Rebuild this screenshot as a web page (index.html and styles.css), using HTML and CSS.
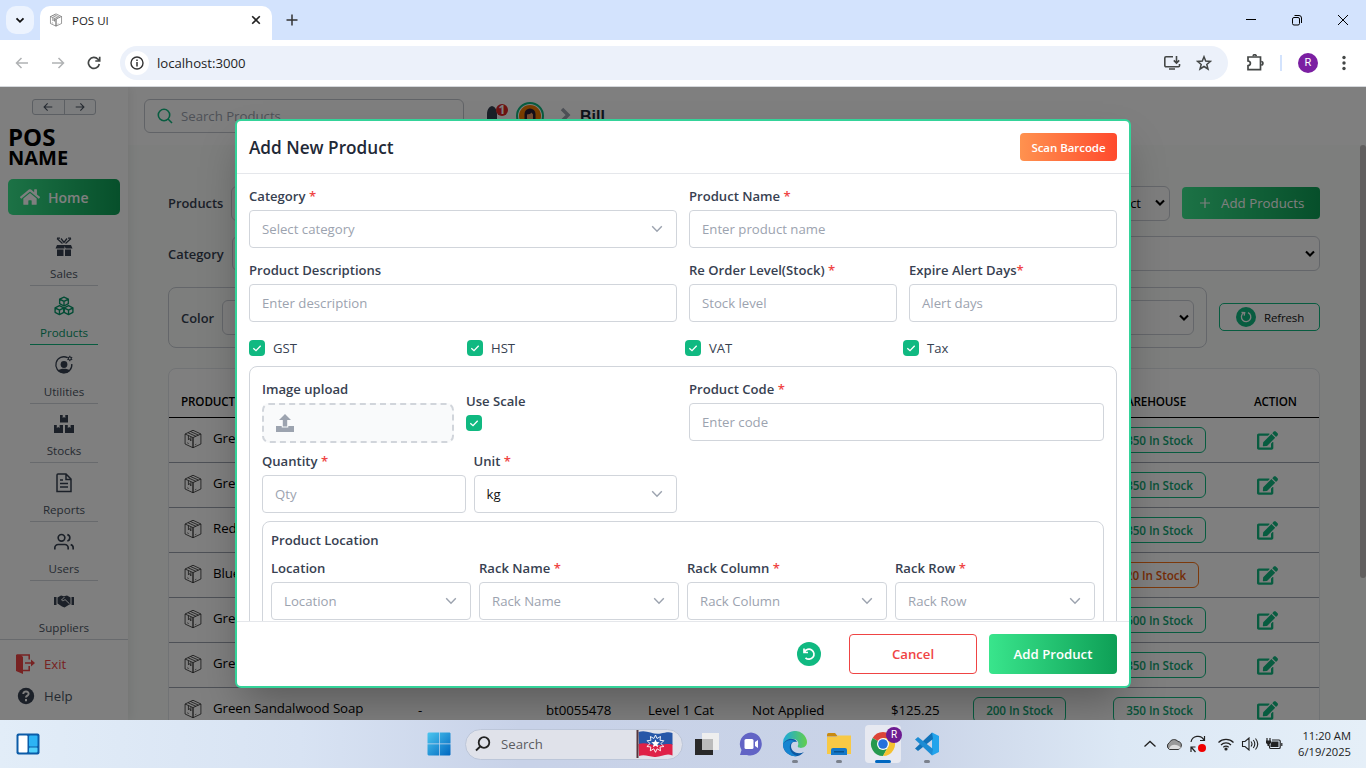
FILE: index.html
```html
<!DOCTYPE html>
<html lang="en">
<head>
<meta charset="utf-8">
<title>POS UI</title>
<link rel="stylesheet" href="styles.css">
</head>
<body>
<svg class="defs" aria-hidden="true">
  <symbol id="box" viewBox="0 0 24 24" fill="none" stroke="currentColor" stroke-width="1" stroke-linejoin="round"><path d="M2.500 6 12 10.300v12.200L2.500 18zM21.500 6 12 10.300v12.200l9.500-4.500zM2.500 6 12 1.500 21.500 6M6 4.500l9.500 4.300M9 3l9.500 4.300M6.500 8v5l1.500-1.500 1.500 2.800V9.500"/><path d="M5 16.500l2 1M14.500 19l1.500-.8" stroke-width=".8"/></symbol>
  <symbol id="edit" viewBox="0 0 576 512"><path fill="currentColor" d="M402.600 83.200l90.200 90.200c3.800 3.800 3.800 10 0 13.800L274.400 405.600l-92.800 10.300c-12.400 1.400-22.900-9.100-21.500-21.500l10.300-92.800L388.800 83.200c3.800-3.800 10-3.800 13.800 0zm162-22.900l-48.800-48.800c-15.200-15.200-39.900-15.200-55.200 0l-35.400 35.400c-3.800 3.800-3.800 10 0 13.800l90.200 90.200c3.800 3.800 10 3.800 13.800 0l35.400-35.400c15.200-15.300 15.200-40 0-55.200zM384 346.200V448H64V128h229.800c3.200 0 6.200-1.300 8.500-3.500l40-40c7.600-7.600 2.200-20.500-8.500-20.500H48C21.500 64 0 85.500 0 112v352c0 26.500 21.500 48 48 48h352c26.500 0 48-21.500 48-48V306.200c0-10.700-12.900-16-20.500-8.500l-40 40c-2.200 2.300-3.500 5.300-3.500 8.500z"/></symbol>
  <symbol id="chev" viewBox="0 0 12 8"><path d="M1.200 1.200 6 6.300l4.800-5.100" fill="none" stroke="currentColor" stroke-width="1.400"/></symbol>
  <symbol id="chevbold" viewBox="0 0 10 8"><path d="M1 1.500 5 5.500l4-4" fill="none" stroke="currentColor" stroke-width="2.100"/></symbol>
  <symbol id="left" viewBox="0 0 14 14"><path d="M13 7H1.500M6.500 2l-5 5 5 5" fill="none" stroke="currentColor" stroke-width="1.500"/></symbol>
  <symbol id="right" viewBox="0 0 14 14"><path d="M1 7h11.500M7.500 2l5 5-5 5" fill="none" stroke="currentColor" stroke-width="1.500"/></symbol>
  <symbol id="tick" viewBox="0 0 16 16"><path d="M4.300 8.200 7 10.700l4.700-5" fill="none" stroke="#fff" stroke-width="1.300"/></symbol>
</svg>

<div class="screen">
  <header class="tabs">
    <div class="tabsearch"><svg width="10" height="7"><use href="#chevbold"/></svg></div>
    <div class="tab">
      <svg class="fav" width="14" height="14"><use href="#box"/></svg><span>POS UI</span>
      <svg width="10" height="10" viewBox="0 0 10 10"><path d="m1.200 1.200 7.600 7.600m0-7.600L1.200 8.800" stroke="#222" stroke-width="1.600"/></svg>
    </div>
    <svg class="plus" width="12" height="12" viewBox="0 0 12 12"><path d="M6 .5v11M.5 6h11" stroke="#333" stroke-width="1.500"/></svg>
    <div class="winctl">
      <svg width="12" height="12" viewBox="0 0 12 12"><path d="M1 5.500h10" stroke="#000"/></svg>
      <svg width="12" height="12" viewBox="0 0 12 12" fill="none" stroke="#000"><rect x="1.500" y="3.500" width="7" height="7.500" rx="1.500"/><path d="M3.500 1.500H8a2.500 2.500 0 0 1 2.500 2.500v5"/></svg>
      <svg width="12" height="12" viewBox="0 0 12 12"><path d="m1 1 10 10M11 1 1 11" stroke="#000"/></svg>
    </div>
  </header>

  <div class="toolbar">
    <svg class="nav off" width="14" height="14"><use href="#left"/></svg>
    <svg class="nav off" width="14" height="14"><use href="#right"/></svg>
    <svg class="nav" width="14" height="14" viewBox="0 0 14 14" fill="none" stroke="#444746" stroke-width="1.700"><path d="M12.300 8A5.500 5.500 0 1 1 11 3.200L12.600 5M12.700.800V5H8.300"/></svg>
    <div class="url">
      <div class="info"><svg width="14" height="14" viewBox="0 0 14 14"><circle cx="7" cy="7" r="6" fill="none" stroke="#333" stroke-width="1.400"/><path d="M7 6v4.500M7 3.400v1.500" stroke="#333" stroke-width="1.500"/></svg></div>
      <span>localhost:3000</span>
      <svg class="install" width="18" height="16" viewBox="0 0 18 16" fill="none" stroke="#444746" stroke-width="1.600"><path d="M10 1.800H3A1.200 1.200 0 0 0 1.800 3v7.500A1.200 1.200 0 0 0 3 11.700h12.500a1 1 0 0 0 1-1V9M13.500 1v7M10.800 5.400l2.700 2.700 2.700-2.700M6 14h6"/></svg>
      <svg width="16" height="16" viewBox="0 0 16 16" fill="none" stroke="#444746" stroke-width="1.500"><path d="m8 1.800 1.700 4.300 4.700.300-3.600 3 1.200 4.600L8 11.500 4 14l1.200-4.600-3.600-3 4.700-.3z"/></svg>
    </div>
    <svg class="puzzle" width="18" height="18" viewBox="0 0 18 18" fill="none" stroke="#444746" stroke-width="1.700"><path d="M2 3h12.500v12.700H2v-4c3.200-.2 3.200-4.500 0-4.700z"/><path d="M7.200 2.200a1.500 1.500 0 0 1 3 0M15.200 7.500a1.500 1.500 0 0 1 0 3.400"/></svg>
    <i class="sep"></i>
    <b class="avatar">R</b>
    <svg class="dots" width="4" height="16" viewBox="0 0 4 16" fill="#444746"><circle cx="2" cy="2.500" r="1.700"/><circle cx="2" cy="8" r="1.700"/><circle cx="2" cy="13.500" r="1.700"/></svg>
  </div>

  <div class="page">
    <aside class="side">
      <div class="hist"><span><svg width="10" height="10"><use href="#left"/></svg></span><span><svg width="10" height="10"><use href="#right"/></svg></span></div>
      <div class="brand"><span>POS</span><small>NAME</small></div>
      <div class="home"><svg width="20" height="18" viewBox="0 0 576 512"><path fill="#fff" d="M280.370 148.260L96 300.110V464a16 16 0 0 0 16 16l112.060-.290a16 16 0 0 0 15.920-16V368a16 16 0 0 1 16-16h64a16 16 0 0 1 16 16v95.640a16 16 0 0 0 16 16.050L464 480a16 16 0 0 0 16-16V300L295.670 148.260a12.190 12.190 0 0 0-15.300 0zM571.600 251.470L488 182.560V44.050a12 12 0 0 0-12-12h-56a12 12 0 0 0-12 12v72.610L318.470 43a48 48 0 0 0-61 0L4.340 251.470a12 12 0 0 0-1.600 16.900l25.500 31A12 12 0 0 0 45.150 301l235.220-193.740a12.190 12.190 0 0 1 15.300 0L530.900 301a12 12 0 0 0 16.900-1.600l25.500-31a12 12 0 0 0-1.700-16.930z"/></svg><span>Home</span></div>
      <nav class="menu">
        <div class="item"><svg width="20" height="20" viewBox="0 0 20 20" fill="#374151"><path d="M3 8h14l1.500 3.500h-6.800L10.500 9v2.500H1.500zM3 12.500h6.500V19H3zM11 12.500h6V19h-6z"/><path d="m3 1.500 5.500 5M17 1.500l-5.500 5M3 1.200h3M17 1.200h-3M7 1.500l3 4 3-4" fill="none" stroke="#374151" stroke-width="1.300"/></svg><span>Sales</span></div>
        <div class="item on"><svg width="22" height="22" viewBox="0 0 22 22" fill="none" stroke="#059669" stroke-width="1.500" stroke-linejoin="round"><g id="cube"><path d="m11 1.200 4.800 2.300v5L11 11 6.200 8.500v-5zM6.200 3.500 11 6l4.800-2.500M11 6v5"/></g><use href="#cube" x="-5" y="9.500"/><use href="#cube" x="5" y="9.500"/></svg><span>Products</span></div>
        <div class="item"><svg width="20" height="20" viewBox="0 0 20 20"><path d="M13.500 2.700A8 8 0 1 0 17.800 9" fill="none" stroke="#374151" stroke-width="1.300"/><circle cx="10" cy="9.500" r="3.400" fill="#374151"/><path d="M4 15.500c2-2.500 10-2.500 12 0-2 3.600-10 3.600-12 0z" fill="#374151"/><circle cx="15.800" cy="3.500" r="1.500" fill="none" stroke="#374151" stroke-width="1.100"/><path d="M15.800.800v1.200M15.800 5v1.200M13.400 2.200l1 .6M17.200 4.200l1 .6M18.200 2.200l-1 .6M14.400 4.200l-1 .6" stroke="#374151" stroke-width="1.100"/></svg><span>Utilities</span></div>
        <div class="item"><svg width="20" height="20" viewBox="0 0 20 20" fill="#374151"><path d="M6 1h2.700v3L10 3l1.300 1V1H14v7.500H6zM0 11h2.800v3l1.400-1 1.400 1v-3H9v8H0zM11 11h2.800v3l1.400-1 1.400 1v-3H20v8h-9z"/></svg><span>Stocks</span></div>
        <div class="item"><svg width="20" height="20" viewBox="0 0 20 20" fill="none" stroke="#374151" stroke-width="1.500"><path d="M4 1h8l5 5v12.500H3V2a1 1 0 0 1 1-1zM12 1v5.500h5M6 7h3M6 10.500h8M6 14h8"/></svg><span>Reports</span></div>
        <div class="item"><svg width="20" height="20" viewBox="0 0 24 24" fill="none" stroke="#374151" stroke-width="2"><path d="M17 21v-2a4 4 0 0 0-4-4H5a4 4 0 0 0-4 4v2M23 21v-2a4 4 0 0 0-3-3.870M16 3.130a4 4 0 0 1 0 7.750"/><circle cx="9" cy="7" r="4"/></svg><span>Users</span></div>
        <div class="item wide"><svg width="20" height="20" viewBox="0 0 20 20" fill="#374151"><path d="M0 6h2.500v8H0zM17.500 6H20v8h-2.500zM3.500 6.500 7 4.500l3 .7 3-.7 3.500 2v6.800l-1.500.5-4.500 2.700L8 15.500l-4.500-3z"/><path d="m10.500 6-3 3c1 1.200 2.500.7 3.500-.5l4.500 4.300" fill="none" stroke="#fff"/></svg><span>Suppliers</span></div>
      </nav>
      <div class="foot exit"><svg width="20" height="20" viewBox="0 0 20 20"><path d="M0 1h5l2 2v17l-7-3z" fill="#ef4444"/><path d="M.500 1h12.700v4.500M13.200 12v4.500H7M9 9h8" fill="none" stroke="#ef4444" stroke-width="1.500"/><path d="m15 5.500 4 3.500-4 3.500z" fill="#ef4444"/></svg><span>Exit</span></div>
      <div class="foot"><svg width="20" height="20" viewBox="0 0 20 20"><circle cx="10" cy="10" r="8.200" fill="#374151"/><path d="M7.300 8c0-3.700 5.600-3.200 5.300 0-.2 1.700-2.600 1.600-2.600 3.600M10 13v2.200" fill="none" stroke="#fff" stroke-width="2"/></svg><span>Help</span></div>
    </aside>

    <main class="main">
      <div class="top">
        <div class="search"><svg width="16" height="16" viewBox="0 0 16 16" fill="none" stroke="#10b981" stroke-width="1.600"><circle cx="7" cy="7" r="5.700"/><path d="m11 11 4 4"/></svg><span>Search Products</span></div>
        <div class="bell"><svg width="16" height="20" viewBox="0 0 16 20"><path d="M6 2c-3.500 1-5 4-5 8v5h10v-5c0-4-1.500-7-5-8z" fill="#374151"/></svg><b>1</b></div>
        <div class="user"><svg width="28" height="28" viewBox="0 0 28 28"><circle cx="14" cy="14" r="13" fill="#fff" stroke="#10b981" stroke-width="2"/><circle cx="14" cy="14" r="11" fill="#f57c00"/><path d="M8.500 21V12a5.500 5.500 0 0 1 11 0v9z" fill="#2d1f35"/><path d="M11 12.500c2 0 4-1 4.500-2l1.500 2v4a3 3 0 0 1-6 0z" fill="#e89a6a"/></svg></div>
        <svg class="bc" width="12" height="16" viewBox="0 0 12 16"><path d="m2 2 6 6-6 6" fill="none" stroke="#9ca3af" stroke-width="3.500"/></svg>
        <strong>Bill</strong>
      </div>
      <div class="content">
        <div class="row r1"><label>Products</label><div class="sel"><span>Product</span><svg width="10" height="8"><use href="#chevbold"/></svg></div><div class="addp"><svg width="10" height="10" viewBox="0 0 10 10"><path d="M5 0v10M0 5h10" stroke="#fff" stroke-width="1.200"/></svg><span>Add Products</span></div></div>
        <div class="row r2"><label>Category</label><div class="sel"><svg width="10" height="8"><use href="#chevbold"/></svg></div></div>
        <div class="row r3"><div class="filter"><label>Color</label><div class="sel"><svg width="10" height="8"><use href="#chevbold"/></svg></div></div><div class="refresh"><svg width="20" height="20" viewBox="0 0 20 20"><circle cx="10" cy="10" r="10" fill="#10b981"/><path d="M7.500 6A4.700 4.700 0 1 0 12 5.600M5.500 5.500l3.200.200-.500 3" fill="none" stroke="#fff" stroke-width="1.300"/></svg><span>Refresh</span></div></div>
        <section class="table">
          <div class="tr th"><span>PRODUCT</span><span class="c8">WAREHOUSE</span><span class="c9">ACTION</span></div>
          <div class="tr"><svg class="pk"><use href="#box"/></svg><span class="nm cut">Green</span><span class="c8"><em>350 In Stock</em></span><svg class="c9 ed"><use href="#edit"/></svg></div>
          <div class="tr"><svg class="pk"><use href="#box"/></svg><span class="nm cut">Green</span><span class="c8"><em>350 In Stock</em></span><svg class="c9 ed"><use href="#edit"/></svg></div>
          <div class="tr"><svg class="pk"><use href="#box"/></svg><span class="nm cut">Red</span><span class="c8"><em>350 In Stock</em></span><svg class="c9 ed"><use href="#edit"/></svg></div>
          <div class="tr"><svg class="pk"><use href="#box"/></svg><span class="nm cut">Blue</span><span class="c8"><em class="low">20 In Stock</em></span><svg class="c9 ed"><use href="#edit"/></svg></div>
          <div class="tr"><svg class="pk"><use href="#box"/></svg><span class="nm cut">Green</span><span class="c8"><em>500 In Stock</em></span><svg class="c9 ed"><use href="#edit"/></svg></div>
          <div class="tr"><svg class="pk"><use href="#box"/></svg><span class="nm cut">Green</span><span class="c8"><em>350 In Stock</em></span><svg class="c9 ed"><use href="#edit"/></svg></div>
          <div class="tr"><svg class="pk"><use href="#box"/></svg><span class="nm">Green Sandalwood Soap</span><span class="c2">-</span><span class="c3">bt0055478</span><span class="c4">Level 1 Cat</span><span class="c5">Not Applied</span><span class="c6">$125.25</span><span class="c7"><em>200 In Stock</em></span><span class="c8"><em>350 In Stock</em></span><svg class="c9 ed"><use href="#edit"/></svg></div>
        </section>
      </div>
      <i class="scroll"></i>
    </main>

    <div class="overlay">
      <div class="modal">
        <div class="mhead"><h2>Add New Product</h2><button class="scan">Scan Barcode</button></div>
        <div class="mbody">
          <div class="grid2">
            <div class="f"><label>Category <i>*</i></label><div class="in"><span>Select category</span><svg width="12" height="8"><use href="#chev"/></svg></div></div>
            <div class="f"><label>Product Name <i>*</i></label><div class="in"><span>Enter product name</span></div></div>
            <div class="f"><label>Product Descriptions</label><div class="in"><span>Enter description</span></div></div>
            <div class="grid2">
              <div class="f"><label>Re Order Level(Stock) <i>*</i></label><div class="in"><span>Stock level</span></div></div>
              <div class="f"><label>Expire Alert Days<i>*</i></label><div class="in"><span>Alert days</span></div></div>
            </div>
          </div>
          <div class="checks">
            <div><svg class="cb"><use href="#tick"/></svg><span>GST</span></div><div><svg class="cb"><use href="#tick"/></svg><span>HST</span></div><div><svg class="cb"><use href="#tick"/></svg><span>VAT</span></div><div><svg class="cb"><use href="#tick"/></svg><span>Tax</span></div>
          </div>
          <div class="card">
            <div class="grid2">
              <div class="pair">
                <div class="f up"><label>Image upload</label><div class="drop"><svg width="18" height="18" viewBox="0 0 18 18" fill="#9ca3af"><path d="m9 0 6 6h-3.800v6.500H6.800V6H3z"/><path d="M0 12h5.700v1.500h6.600V12H18v6H0z"/></svg></div></div>
                <div class="scale"><label>Use Scale</label><svg class="cb"><use href="#tick"/></svg></div>
              </div>
              <div class="f"><label>Product Code <i>*</i></label><div class="in"><span>Enter code</span></div></div>
            </div>
            <div class="grid2 second">
              <div class="grid2 tight">
                <div class="f"><label>Quantity <i>*</i></label><div class="in"><span>Qty</span></div></div>
                <div class="f"><label>Unit <i>*</i></label><div class="in val"><span>kg</span><svg width="12" height="8"><use href="#chev"/></svg></div></div>
              </div>
            </div>
            <div class="loc">
              <h3>Product Location</h3>
              <div class="grid4">
                <div class="f"><label>Location</label><div class="in"><span>Location</span><svg width="12" height="8"><use href="#chev"/></svg></div></div>
                <div class="f"><label>Rack Name <i>*</i></label><div class="in"><span>Rack Name</span><svg width="12" height="8"><use href="#chev"/></svg></div></div>
                <div class="f"><label>Rack Column <i>*</i></label><div class="in"><span>Rack Column</span><svg width="12" height="8"><use href="#chev"/></svg></div></div>
                <div class="f"><label>Rack Row <i>*</i></label><div class="in"><span>Rack Row</span><svg width="12" height="8"><use href="#chev"/></svg></div></div>
              </div>
            </div>
          </div>
        </div>
        <div class="mfoot">
          <svg width="24" height="24" viewBox="0 0 24 24"><circle cx="12" cy="12" r="12" fill="#10b981"/><path d="M7 6.500v4h4M7.500 10a5 5 0 1 1 1 5.800" fill="none" stroke="#fff" stroke-width="1.700"/></svg>
          <button class="cancel">Cancel</button><button class="add">Add Product</button>
        </div>
      </div>
    </div>
  </div>

  <footer class="taskbar">
    <svg class="widget" width="24" height="24" viewBox="0 0 24 24"><rect x=".500" y="1.500" width="23" height="21" rx="2" fill="#0c5ca8"/><rect x="2.500" y="3.500" width="9" height="17" rx="1" fill="#fff"/><rect x="13" y="3.500" width="8.500" height="11" rx="1" fill="#2db4f5"/><rect x="13" y="15.500" width="8.500" height="5" rx="1" fill="#51d1fb"/></svg>
    <div class="dock">
      <svg width="24" height="24" viewBox="0 0 24 24"><defs><linearGradient id="w" x2="1" y2="1"><stop stop-color="#4cc6ef"/><stop offset="1" stop-color="#0067c0"/></linearGradient></defs><path fill="url(#w)" d="M1.500.500H12v11H.500v-10zM12.700.500h10l.8.800v10.200H12.700zM.500 12.300H12v11.200H1.500l-1-1zM12.700 12.300h10.800v10.400l-.8.800h-10z"/></svg>
      <div class="find"><svg width="16" height="16" viewBox="0 0 16 16" fill="none" stroke="#222" stroke-width="1.800"><circle cx="9" cy="6.500" r="5.300"/><path d="m5.200 10.500-4.200 4"/></svg><span>Search</span>
        <svg class="flag" width="38" height="30" viewBox="0 0 38 30"><path d="M2.500 3c8-3 14 3 22 1.500 5-.8 8-2 12-.5V16H3z" fill="#2757a8"/><path d="M2.500 15c8-2.500 14 2.500 22 1 5-.8 8-1.500 12-.5v11c-7-3-11 2-18 1.500-6-.5-10-3-15.500-1z" fill="#df2147"/><path d="m19.500 6 1.500 3.500 3.500-2-.5 3.800 3.800.4-2.900 2.900 3 2.900-3.900.5.500 3.800-3.400-2-1.600 3.500-1.700-3.500-3.500 2 .5-3.800-3.900-.5 3.100-2.900-2.900-2.900 3.800-.4-.5-3.800 3.500 2z" fill="none" stroke="#fff" stroke-width=".9"/><path d="m19.500 10.500 1.200 2.600 3 .2-2.300 2 .7 3-2.600-1.600-2.600 1.600.7-3-2.300-2 3-.2z" fill="#fff"/><path d="M1.500 1v28" stroke="#55363d" stroke-width="2"/></svg></div>
      <div class="app"><svg width="26" height="26" viewBox="0 0 26 26"><rect x="8" y="2" width="17" height="17" fill="#eee"/><rect x="1" y="8" width="18" height="16" fill="#292929"/><path d="M8 8h11v11H8z" fill="#bbb"/></svg></div>
      <div class="app"><svg width="24" height="24" viewBox="0 0 24 24"><path d="M12 .500A11.500 11.500 0 1 1 8 23H1l1.500-5A11.500 11.500 0 0 1 12 .500z" fill="#6264c5"/><rect x="5.500" y="7" width="9" height="10" rx="1.500" fill="#fff"/><path d="m16 10 3-2v8l-3-2z" fill="#fff"/></svg></div>
      <div class="app run"><svg width="26" height="26" viewBox="0 0 26 26"><defs><linearGradient id="e1"><stop stop-color="#1ba7de"/><stop offset="1" stop-color="#63cf4c"/></linearGradient></defs><path d="M1 13A12 12 0 0 1 25 11c0 6-7 7-9 5-1-1 1-2 0-5-2-4-10-5-15 2z" fill="url(#e1)"/><path d="M1 13c4-7 12-6 14-2-3-1-6 0-6 4 0 6 7 9 13 6A12 12 0 0 1 1 13z" fill="#0c59a4"/><path d="M1 13c4-5 10-5 13-2-4-1-7 2-6 7 1 4 4 6 7 7A12 12 0 0 1 1 13z" fill="#1684d0"/></svg></div>
      <div class="app run"><svg width="26" height="24" viewBox="0 0 26 24"><path d="M1 2.500Q1 1 2.500 1H9l3 3.500H1z" fill="#c98a10"/><path d="M1 5h9l2-1.500h13V22H1z" fill="#f8c945"/><path d="M5 23v-5q0-2 2-2h12q2 0 2 2v5z" fill="#1377c8"/><path d="M8 19h10v1.500H8z" fill="#075390"/></svg></div>
      <div class="app chrome"><svg width="26" height="26" viewBox="0 0 26 26"><path d="M13 13 2.600 7A12 12 0 0 1 23.400 7z" fill="#db4437"/><path d="M13 13 2.600 7A12 12 0 0 0 13 25l5-9z" fill="#26994e"/><path d="M13 13 18 16l-5 9A12 12 0 0 0 23.400 7H13z" fill="#f5c12f"/><circle cx="13" cy="13" r="6" fill="#fff"/><circle cx="13" cy="13" r="4.800" fill="#2571dc"/></svg><b>R</b></div>
      <div class="app run"><svg width="26" height="26" viewBox="0 0 26 26"><path d="M18 1.500 25 5v16l-7 3.500z" fill="#23a4ec"/><path d="m18 1.500 1 6.500L4 20l-3-2.500z" fill="#1273b9"/><path d="M1 8.500 4 6l15 12-1 6.500z" fill="#1c8cd4"/></svg></div>
    </div>
    <div class="tray">
      <svg class="more" width="14" height="14" viewBox="0 0 14 14"><path d="m1.500 9.500 5.500-5 5.500 5" fill="none" stroke="#222" stroke-width="1.300"/></svg>
      <svg width="18" height="14" viewBox="0 0 18 14"><path d="M4.500 12.500a4 4 0 0 1 0-7 5 5 0 0 1 8.500-1c4 0 5 6.500 0 8z" fill="#999" stroke="#333"/><path d="M4 12c1-5 8-6 12-1l-3 1z" fill="#ddd"/></svg>
      <svg width="18" height="18" viewBox="0 0 18 18"><path d="M2 7A7 7 0 0 1 15 5M15.500 1v4.500H11M2 17v-5h4.500M2.500 12.500l4 4.500" fill="none" stroke="#222" stroke-width="1.200"/><circle cx="13" cy="13" r="4" fill="#f00000"/></svg>
      <svg class="wifi" width="18" height="14" viewBox="0 0 18 14" fill="none" stroke="#222" stroke-width="1.200"><path d="M1.500 5.500a10.500 10.500 0 0 1 15 0M4 8a7 7 0 0 1 10 0M6.300 10.300a4 4 0 0 1 5.400 0"/><circle cx="9" cy="12" r="1" fill="#222"/></svg>
      <svg width="18" height="14" viewBox="0 0 18 14" fill="none" stroke="#222" stroke-width="1.100"><path d="M1.500 4.500H4L8 1v12L4 9.500H1.500zM10 4.500q2 2.500 0 5M12.300 3q3 4 0 8M14.500 1.500q4.500 5.500 0 11"/></svg>
      <svg width="18" height="14" viewBox="0 0 18 14"><path d="M6.500 4.500h7v5.500h-8V8z" fill="#222"/><path d="M7 3h7q1.200 0 1.200 1.200v6q0 1.300-1.200 1.300H5.500Q4.500 11.500 4.500 10V8.500M16.800 6v3M2 1v3M5 1v3" fill="none" stroke="#222" stroke-width="1.200"/><path d="M1 3.500h5V6L4.500 7.500v1.500h-2V7.500L1 6z" fill="#222"/></svg>
      <div class="clock"><span>11:20 AM</span><span>6/19/2025</span></div>
    </div>
  </footer>
</div>
</body>
</html>
```
FILE: styles.css
```css
* { box-sizing: border-box; }
body { margin: 0; font-family: "Open Sans", "Noto Sans", sans-serif; font-size: 13px; color: #111; }
svg { display: block; flex: none; }
i { font-style: normal; }
button { font-family: inherit; padding: 0; border: 0; }
.defs { position: absolute; width: 0; height: 0; }
.screen { width: 1366px; height: 768px; overflow: hidden; display: flex; flex-direction: column; }

/* browser frame */
.tabs { height: 40px; background: #d3e3fd; display: flex; align-items: flex-end; padding-left: 6px; flex: none; }
.tabsearch { width: 28px; height: 28px; border-radius: 10px; background: #ecf3fe; display: flex; align-items: center; justify-content: center; margin: 0 6px 6px 0; }
.tab { width: 232px; height: 34px; border-radius: 10px 10px 0 0; background: #fff; display: flex; align-items: center; padding: 0 11px 6px 9px; gap: 9px; font-size: 11.5px; color: #1f1f1f; }
.tab span { flex: 1; }
.fav { color: #555; }
.plus { margin: 0 0 14px 14px; }
.winctl { margin-left: auto; display: flex; gap: 34px; padding: 0 17px 14px 0; }
.toolbar { height: 47px; flex: none; background: #fff; border-bottom: 1px solid #d5d8dc; display: flex; align-items: center; padding-left: 15px; }
.nav { margin-right: 22px; color: #444746; }
.nav.off { color: #b0b2b4; }
.nav + .url { margin-left: -3px; }
.url { width: 1108px; height: 34px; border-radius: 17px; background: #ecf1fa; display: flex; align-items: center; padding: 0 16px 0 5px; font-size: 13.2px; letter-spacing: -.03px; color: #1f1f1f; }
.info { width: 24px; height: 24px; border-radius: 50%; background: #fff; display: grid; place-items: center; margin-right: 8px; }
.install { margin: 0 15px 0 auto; }
.puzzle { margin-left: 18px; }
.sep { width: 2px; height: 16px; background: #d3e3fd; margin: 0 16px; }
.avatar { width: 20px; height: 20px; border-radius: 50%; background: #7b1fa2; color: #fff; font: 11px/20px Roboto, sans-serif; text-align: center; }
.dots { margin-left: 24px; }

/* page */
.page { flex: 1; min-height: 0; position: relative; display: flex; background: #fafdfb; overflow: hidden; }
.side { width: 128px; background: #fff; box-shadow: 2px 0 10px rgba(0,0,0,.08); z-index: 1; flex: none; }
.hist { display: flex; width: 64px; height: 16px; margin: 12px auto 0; border: 1px solid #b9bec7; border-radius: 3px; background: #f8fafc; }
.hist span { flex: 1; display: grid; place-items: center; color: #4b5563; }
.hist span + span { border-left: 1px solid #b9bec7; }
.brand { margin: 10px 0 0 8px; display: flex; flex-direction: column; font-weight: 700; font-size: 24px; line-height: 23px; color: #000; }
.brand small { font-size: 20px; line-height: 20px; }
.home { margin: 11px 8px 0; height: 36px; border-radius: 5px; background: linear-gradient(90deg, #39e58c, #0e9f56); display: flex; align-items: center; gap: 8px; padding-left: 12px; color: #fff; font-weight: 600; font-size: 14px; }
.menu { margin-top: 12px; }
.item { height: 59px; width: 68px; margin: 0 auto; border-bottom: 1px solid #d1d5db; display: flex; flex-direction: column; align-items: center; justify-content: space-between; padding: 10px 0 3px; font-size: 11.6px; line-height: 17px; color: #4b5563; }
.item svg { height: 20px; }
.item.on { color: #059669; border-color: #10b981; }
.item.wide { width: 128px; }
.foot { height: 32px; display: flex; align-items: center; gap: 8px; padding-left: 16px; font-size: 13.2px; color: #4b5563; }
.exit { margin-top: 8px; color: #ef4444; }
.main { flex: 1; position: relative; }
.top { height: 58px; background: #fff; padding: 12px 0 0 16px; display: flex; }
.search { width: 320px; height: 34px; border: 1px solid #c3c7ce; border-radius: 6px; display: flex; align-items: center; gap: 8px; padding-left: 12px; color: #9ca3af; font-size: 13.2px; }
.bell { margin-left: 22px; display: flex; padding-top: 5px; width: 22px; }
.bell b { flex: none; width: 12px; height: 12px; margin: 0 0 0 -6px; border-radius: 50%; background: #dc2626; color: #fff; font-size: 12px; line-height: 12px; text-align: center; }
.user { margin: 3px 0 0 8px; }
.bc { margin: 8px 0 0 16px; }
.top strong { margin: 7px 0 0 8px; font: bold 16px/22px "Liberation Sans", sans-serif; color: #1f2937; }
.content { padding: 40px 46px 0 40px; }
.row { display: flex; align-items: center; gap: 8px; }
.row label { font-weight: 600; color: #374151; font-size: 12.9px; }
.sel { flex: 1; height: 35px; border: 1px solid #c9cdd4; border-radius: 6px; display: flex; align-items: center; justify-content: flex-end; gap: 14px; padding-right: 4px; color: #000; background: #fdfdfd; font-size: 13px; }
.r1 { height: 36px; }
.addp { width: 138px; height: 32px; border-radius: 4px; margin-left: 4px; background: linear-gradient(90deg, #39e58c, #0e9f56); color: #fff; display: flex; gap: 11px; align-items: center; padding-left: 18px; font-size: 13.3px; }
.r2 { margin-top: 15px; height: 35px; }
.r3 { margin-top: 16px; gap: 12px; }
.filter { flex: 1; height: 61px; border: 1px solid #c9cdd4; border-radius: 8px; display: flex; align-items: center; gap: 8px; padding: 0 12px; }
.refresh { width: 101px; height: 28px; border: 1px solid #10b981; border-radius: 5px; background: #fff; display: flex; align-items: center; gap: 8px; padding-left: 16px; font-size: 11.5px; letter-spacing: -.15px; color: #111; margin-bottom: 1px; }
.table { margin-top: 20px; border: 1px solid #e3e6ea; border-radius: 8px; background: #fff; }
.tr { height: 45px; border-bottom: 1px solid #9ca3af; display: grid; grid-template-columns: 12px 32px 205px 128px 102px 104px 139px 82px 140px 141px 65px; align-items: center; font-size: 13.3px; letter-spacing: -.08px; color: #000; }
.th { height: 49px; border-color: #000; font-size: 11.7px; font-weight: 600; letter-spacing: -.15px; padding-top: 16px; }
.th span:first-child { grid-column: 2 / 4; }
.th .c8 { padding-left: 2px; }
.tr > * { grid-row: 1; white-space: nowrap; }
.pk { grid-column: 2; width: 24px; height: 20px; color: #333; margin-top: -3px; }
.nm { grid-column: 3; padding-bottom: 5px; }
.cut { width: 23px; overflow: hidden; }
.c2 { grid-column: 4; } .c3 { grid-column: 5; } .c4 { grid-column: 6; } .c5 { grid-column: 7; } .c6 { grid-column: 8; } .c7 { grid-column: 9; } .c8 { grid-column: 10; } .c9 { grid-column: 11; }
.ed { width: 21px; height: 19px; color: #10b981; margin-left: 3px; }
.tr em { display: inline-block; width: 93px; height: 26px; border: 1px solid #10b981; border-radius: 6px; color: #10a573; font: 600 11.7px/24px "Open Sans", sans-serif; text-align: center; letter-spacing: -.1px; }
.tr em.low { color: #e8590c; border-color: #f97316; width: 86px; }
.scroll { position: absolute; right: 0; top: 58px; width: 6px; height: 433px; background: #c2bfbe; border-radius: 3px; }

/* dialog */
.overlay { position: absolute; inset: 0; z-index: 2; background: rgba(0,0,0,.5); display: flex; justify-content: center; align-items: center; }
.modal { width: 896px; height: 569px; border: 2px solid #34d399; border-radius: 6px; background: #fff; box-shadow: 0 20px 40px -8px rgba(0,0,0,.3); display: flex; flex-direction: column; overflow: hidden; }
.mhead { height: 53px; border-bottom: 1px solid #e5e7eb; padding: 0 12px; display: flex; align-items: center; justify-content: space-between; flex: none; }
h2 { margin: 0; font-size: 17.2px; font-weight: 600; color: #1f2937; letter-spacing: 0; }
.scan { width: 97px; height: 28px; border-radius: 4px; background: linear-gradient(90deg, #ff924f, #ff4a2d); color: #fff; font-size: 11.5px; font-weight: 600; letter-spacing: -.05px; }
.mbody { flex: 1; min-height: 0; overflow: hidden; padding: 12px; }
.grid2 { display: grid; grid-template-columns: 1fr 1fr; gap: 12px; }
.grid4 { display: grid; grid-template-columns: repeat(4, 1fr); gap: 8px; }
.tight { gap: 8px; }
.f { display: flex; flex-direction: column; gap: 4px; }
.mbody label, h3 { font-weight: 600; font-size: 13.1px; line-height: 20px; color: #374151; letter-spacing: 0; white-space: nowrap; }
label i { color: #ef4444; }
.in { height: 38px; border: 1px solid #d1d5db; border-radius: 4px; padding: 0 13px 0 12px; display: flex; align-items: center; justify-content: space-between; color: #9ca3af; font-size: 13.2px; letter-spacing: 0; }
.val span { color: #111; }
.checks { display: grid; grid-template-columns: repeat(4, 1fr); gap: 4px; margin: 16px 0 8px; }
.checks div { display: flex; align-items: center; gap: 8px; height: 20px; font-size: 13.1px; font-weight: 500; color: #374151; }
.cb { width: 16px; height: 16px; background: #10b981; border-radius: 4px; }
.card { border: 1px solid #d1d5db; border-radius: 8px; padding: 12px; height: 320px; }
.pair { display: flex; gap: 12px; }
.up { width: 192px; }
.drop { height: 40px; border: 2px dashed #d1d5db; border-radius: 7px; background: #f9fafb; padding: 9px 12px; }
.scale { display: flex; flex-direction: column; gap: 4px; padding-top: 12px; }
.second { margin-top: 8px; }
.loc { margin-top: 8px; border: 1px solid #d1d5db; border-radius: 8px; height: 180px; padding: 8px; }
h3 { margin: 0 0 8px; }
.mfoot { height: 65px; border-top: 1px solid #e5e7eb; flex: none; display: flex; align-items: center; justify-content: flex-end; padding: 0 12px; }
.mfoot button { width: 128px; height: 40px; border-radius: 4px; font-size: 13.2px; font-weight: 600; }
.mfoot .cancel { margin: 0 12px 0 28px; background: #fff; border: 1px solid #ef4444; color: #ef4444; }
.add { background: linear-gradient(90deg, #39e58c, #0e9f56); color: #fff; }

/* taskbar */
.taskbar { height: 48px; flex: none; background: linear-gradient(90deg, #e2edf8, #d8e3f3 22%, #c8d2e8 38%, #c9d3e7 66%, #dce8f5 82%, #e5eff8); display: flex; align-items: center; }
.widget { margin-left: 16px; }
.dock { display: flex; align-items: center; margin-left: 387px; }
.find { width: 218px; height: 31px; border-radius: 16px; background: #e0e2ea; border: 1px solid #bcc6d9; margin: 0 6px 0 14px; display: flex; align-items: center; gap: 10px; padding: 0 8px 0 9px; font-size: 13.2px; color: #5a5b60; }
.flag { margin-left: auto; }
.app { width: 36px; height: 38px; margin-right: 8px; position: relative; display: grid; place-items: center; border-radius: 4px; }
.app.run::after, .chrome::after { content: ""; position: absolute; bottom: 0; left: 15px; width: 6px; height: 3px; border-radius: 2px; background: #7b818c; }
.chrome { background: #e7e9f1; }
.chrome::after { left: 10px; width: 16px; background: #0067c0; }
.chrome b { position: absolute; right: -1px; top: 2px; width: 16px; height: 16px; border-radius: 50%; background: #6d1b91; color: #fff; font: 10px/16px Roboto, sans-serif; text-align: center; }
.tray { margin-left: auto; display: flex; align-items: center; gap: 6px; padding-right: 15px; }
.more { margin-right: 2px; }
.wifi { margin-left: 4px; }
.clock { width: 56px; margin-left: 6px; display: flex; flex-direction: column; align-items: flex-end; font-size: 11.2px; line-height: 16px; color: #222; letter-spacing: 0; white-space: nowrap; }
```
